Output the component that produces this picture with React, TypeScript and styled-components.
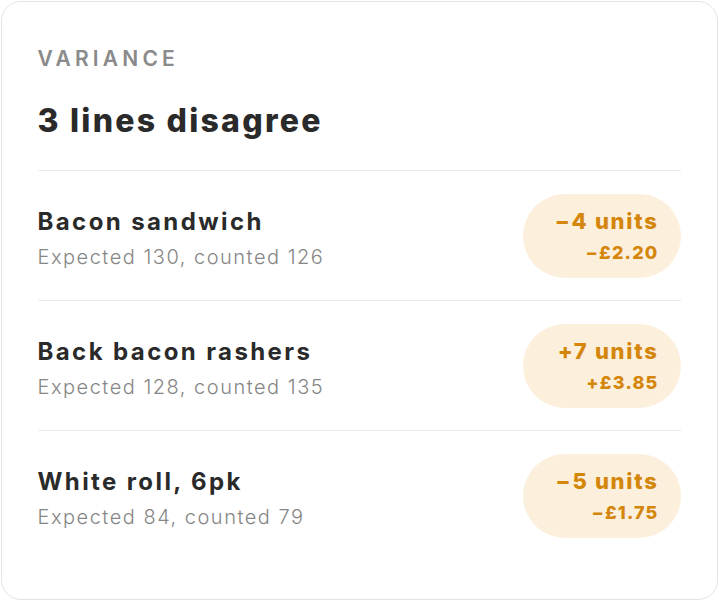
import * as React from 'react';
import styled, { createGlobalStyle } from 'styled-components';

const GlobalStyle = createGlobalStyle`
  html, body {
    margin: 0;
    padding: 0;
    background: #ffffff;
  }
  body {
    font-family: 'Inter', 'Liberation Sans', sans-serif;
  }
`;

interface VarianceLine {
  name: string;
  expected: number;
  counted: number;
  units: string;
  value: string;
}

const LINES: VarianceLine[] = [
  { name: 'Bacon sandwich', expected: 130, counted: 126, units: '\u22124 units', value: '\u2212£2.20' },
  { name: 'Back bacon rashers', expected: 128, counted: 135, units: '+7 units', value: '+£3.85' },
  { name: 'White roll, 6pk', expected: 84, counted: 79, units: '\u22125 units', value: '\u2212£1.75' },
];

const Card = styled.section`
  box-sizing: border-box;
  margin: 1px;
  width: 717px;
  height: 599px;
  border: 1.5px solid #e4e4e4;
  border-radius: 20px;
  background: #ffffff;
  padding: 40px 36.5px 0 35.5px;
`;

const Eyebrow = styled.div`
  font-size: 21px;
  font-weight: 600;
  letter-spacing: 4.2px;
  color: #8a8a8a;
  line-height: 32px;
  margin-top: 1px;
`;

const Title = styled.h1`
  margin: 26px 0 0;
  font-size: 32px;
  font-weight: 800;
  letter-spacing: 2.25px;
  color: #2a2a2a;
  line-height: 40px;
  padding-bottom: 29px;
  border-bottom: 1.5px solid #ebebeb;
`;

const Row = styled.div<{ $last?: boolean }>`
  display: flex;
  align-items: center;
  justify-content: space-between;
  height: 129px;
  border-bottom: ${(p) => (p.$last ? 'none' : '1.5px solid #ebebeb')};
`;

const Info = styled.div`
  display: flex;
  flex-direction: column;
  gap: 7px;
  padding-top: 5px;
`;

const Name = styled.div`
  font-size: 24px;
  font-weight: 700;
  letter-spacing: 2.4px;
  color: #2a2a2a;
  line-height: 30px;
`;

const Detail = styled.div`
  font-size: 20px;
  font-weight: 300;
  letter-spacing: 1.5px;
  color: #868686;
  line-height: 26px;
`;

const Pill = styled.div`
  box-sizing: border-box;
  width: 158px;
  height: 84px;
  border-radius: 42px;
  background: #fcefdc;
  padding: 0 22px;
  display: flex;
  flex-direction: column;
  align-items: flex-end;
  justify-content: center;
  gap: 8px;
  color: #d4860b;
`;

const Units = styled.div`
  font-size: 22px;
  font-weight: 800;
  letter-spacing: 1.7px;
  line-height: 26px;
`;

const Money = styled.div`
  font-size: 18px;
  font-weight: 800;
  letter-spacing: 1.2px;
  line-height: 22px;
`;

export default function App() {
  return (
    <>
      <GlobalStyle />
      <Card>
        <Eyebrow>VARIANCE</Eyebrow>
        <Title>3 lines disagree</Title>
        {LINES.map((line, i) => (
          <Row key={line.name} $last={i === LINES.length - 1}>
            <Info>
              <Name>{line.name}</Name>
              <Detail>
                Expected {line.expected}, counted {line.counted}
              </Detail>
            </Info>
            <Pill>
              <Units>{line.units}</Units>
              <Money>{line.value}</Money>
            </Pill>
          </Row>
        ))}
      </Card>
    </>
  );
}
